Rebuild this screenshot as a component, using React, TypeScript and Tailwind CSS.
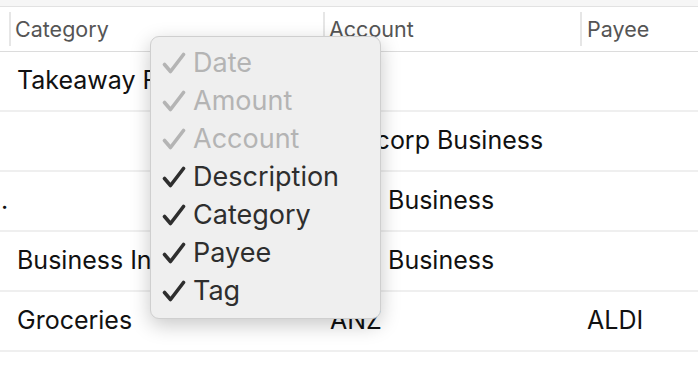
const rows = [
  { lead: '', category: 'Takeaway Food', account: 'ANZ', payee: '' },
  { lead: '', category: '', account: 'Suncorp Business', payee: '' },
  { lead: '.', category: '', account: 'UBS Business', payee: '' },
  { lead: '', category: 'Business Insurance', account: 'UBS Business', payee: '' },
  { lead: '', category: 'Groceries', account: 'ANZ', payee: 'ALDI' },
];

const columns = [
  { label: 'Date', enabled: false },
  { label: 'Amount', enabled: false },
  { label: 'Account', enabled: false },
  { label: 'Description', enabled: true },
  { label: 'Category', enabled: true },
  { label: 'Payee', enabled: true },
  { label: 'Tag', enabled: true },
];

function Check({ color }: { color: string }) {
  return (
    <svg width="24" height="24" viewBox="0 0 24 24" className="shrink-0">
      <path
        d="M2.5 13.5 L8.5 20.5 L21.5 3.5"
        fill="none"
        stroke={color}
        strokeWidth="3.6"
        strokeLinecap="round"
        strokeLinejoin="round"
      />
    </svg>
  );
}

export default function App() {
  return (
    <div
      className="relative w-[698px] h-[366px] overflow-hidden bg-white"
      style={{ fontFamily: 'Inter, "Liberation Sans", sans-serif' }}
    >
      <div className="h-[7px] bg-[#f6f6f6] border-b border-[#e2e2e2]" />

      {/* header */}
      <div className="flex h-[45px] items-center border-b border-[#dcdcdc] text-[21.5px] text-[#555]">
        <div className="w-[9px] shrink-0" />
        <div className="w-[314px] shrink-0 flex items-center">
          <div className="w-[2px] h-[34px] bg-[#e6e6e6]" />
          <span className="pl-[4px]">Category</span>
        </div>
        <div className="w-[257px] shrink-0 flex items-center">
          <div className="w-[2px] h-[34px] bg-[#e6e6e6]" />
          <span className="pl-[4px]">Account</span>
        </div>
        <div className="flex-1 flex items-center">
          <div className="w-[2px] h-[34px] bg-[#e6e6e6]" />
          <span className="pl-[5px]">Payee</span>
        </div>
      </div>

      {rows.map((row, i) => (
        <div
          key={i}
          className="flex h-[60px] items-center border-b-2 border-[#efefef] text-[25px] text-[#111]"
        >
          <div className="w-[9px] shrink-0 overflow-hidden pl-[1px]">{row.lead}</div>
          <div className="w-[314px] shrink-0 pl-[8px] whitespace-nowrap overflow-hidden">{row.category}</div>
          <div className="w-[257px] shrink-0 pl-[7px] whitespace-nowrap overflow-hidden">{row.account}</div>
          <div className="flex-1 pl-[7px] whitespace-nowrap">{row.payee}</div>
        </div>
      ))}

      {/* column picker menu */}
      <div className="absolute left-[150px] top-[36px] w-[231px] h-[283px] rounded-[9px] bg-[#efefef] border border-[#cfcfcf] shadow-[0_6px_20px_rgba(0,0,0,0.22)] pt-[7px] pl-[11px]">
        {columns.map((c) => (
          <div
            key={c.label}
            className={`flex items-center h-[38px] text-[27px] ${c.enabled ? 'text-[#2e2e2e]' : 'text-[#b4b4b4]'}`}
          >
            <Check color={c.enabled ? '#2e2e2e' : '#b4b4b4'} />
            <span className="pl-[7px]">{c.label}</span>
          </div>
        ))}
      </div>
    </div>
  );
}
